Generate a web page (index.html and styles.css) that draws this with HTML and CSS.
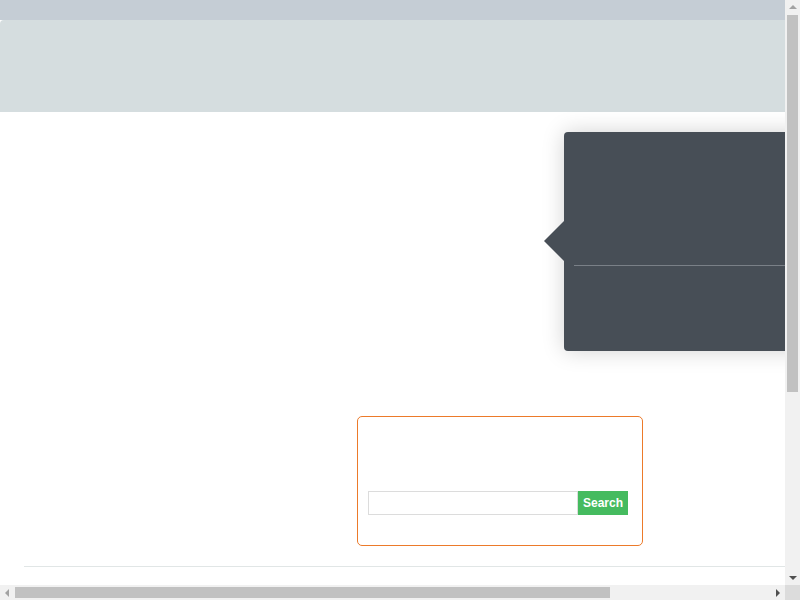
FILE: index.html
```html
<!DOCTYPE html>
<html>
  <head>
    <meta http-equiv="Content-Type" content="text/html; charset=utf-8"/>
    <title>Search</title>
    <link rel="stylesheet" href="styles.css">
  </head>
  <body>
  <div class="page">

    <div class="topbar"></div>
    <div class="header"></div>

    <div class="stage">
      <div class="popover">
        <div class="popover_top"></div>
        <div class="popover_rule"></div>
      </div>
    </div>

    <div class="search_row">
      <div class="search_box">
        <form class="search_form">
          <input type="text" class="search_input">
          <button type="button" class="search_btn">Search</button>
        </form>
      </div>
    </div>

    <div class="footer_rule"></div>

  </div>

  <!-- window scrollbars -->
  <div class="vscroll">
    <span class="arrow arrow_up"></span>
    <div class="vthumb"></div>
    <span class="arrow arrow_down"></span>
  </div>
  <div class="hscroll">
    <span class="arrow arrow_left"></span>
    <div class="hthumb"></div>
    <span class="arrow arrow_right"></span>
  </div>
  <div class="scroll_corner"></div>
  </body>
</html>
```

FILE: styles.css
```css
body { margin: 0; font-family: "Liberation Sans", Arial, sans-serif; background: #fff; overflow: hidden; }
div.page { width: 996px; min-height: 861px; }
div.topbar { height: 20px; background: #c5cdd5; }
div.header { height: 92px; background: #d5dddf; border-top-left-radius: 4px; }

div.stage { padding: 20px 0 0 564px; }
div.popover {
  position: relative;
  width: 400px;
  height: 219px;
  background: #474e56;
  border-radius: 4px;
  box-shadow: 0 0 22px rgba(0, 0, 0, 0.18);
}
div.popover::before {
  content: "";
  position: absolute;
  left: -20px;
  top: 89px;
  border-top: 20px solid transparent;
  border-bottom: 20px solid transparent;
  border-right: 20px solid #474e56;
}
div.popover_top { height: 133px; }
div.popover_rule { margin-left: 10px; border-top: 1px solid #7a8087; }

div.search_row { padding: 65px 0 0 357px; }
div.search_box {
  width: 284px;
  height: 128px;
  border: 1px solid #ec7a2a;
  border-radius: 5px;
}
form.search_form { display: flex; margin: 74px 0 0 10px; }
input.search_input {
  width: 210px;
  height: 24px;
  box-sizing: border-box;
  margin: 0;
  border: 1px solid #dcdcdc;
  padding: 0 4px;
  outline: none;
}
button.search_btn {
  width: 50px;
  height: 24px;
  margin: 0;
  padding: 0;
  border: none;
  background: #45bb5f;
  color: #fff;
  font-family: "Liberation Sans", Arial, sans-serif;
  font-size: 12px;
  font-weight: bold;
}

div.footer_rule { margin: 20px 0 0 24px; border-top: 1px solid #e1e6e6; }

/* scrollbars drawn over the page */
div.vscroll {
  position: fixed;
  top: 0;
  right: 0;
  width: 15px;
  height: 585px;
  background: #f1f1f1;
  display: flex;
  flex-direction: column;
  align-items: center;
}
div.hscroll {
  position: fixed;
  left: 0;
  bottom: 0;
  width: 785px;
  height: 15px;
  background: #f1f1f1;
  display: flex;
  align-items: center;
}
div.scroll_corner {
  position: fixed;
  right: 0;
  bottom: 0;
  width: 15px;
  height: 15px;
  background: #dcdcdc;
}
div.vthumb { width: 11px; height: 377px; background: #c1c1c1; }
div.hthumb { width: 595px; height: 11px; background: #c1c1c1; }
span.arrow { display: block; width: 0; height: 0; flex: none; }
span.arrow_up {
  margin: 5px 0 6px;
  border-left: 4px solid transparent;
  border-right: 4px solid transparent;
  border-bottom: 4px solid #a3a3a3;
}
span.arrow_down {
  margin: auto 0 5px;
  border-left: 4px solid transparent;
  border-right: 4px solid transparent;
  border-top: 4px solid #505050;
}
span.arrow_left {
  margin: 0 6px 0 5px;
  border-top: 4px solid transparent;
  border-bottom: 4px solid transparent;
  border-right: 4px solid #a3a3a3;
}
span.arrow_right {
  margin: 0 5px 0 auto;
  border-top: 4px solid transparent;
  border-bottom: 4px solid transparent;
  border-left: 4px solid #505050;
}
```
